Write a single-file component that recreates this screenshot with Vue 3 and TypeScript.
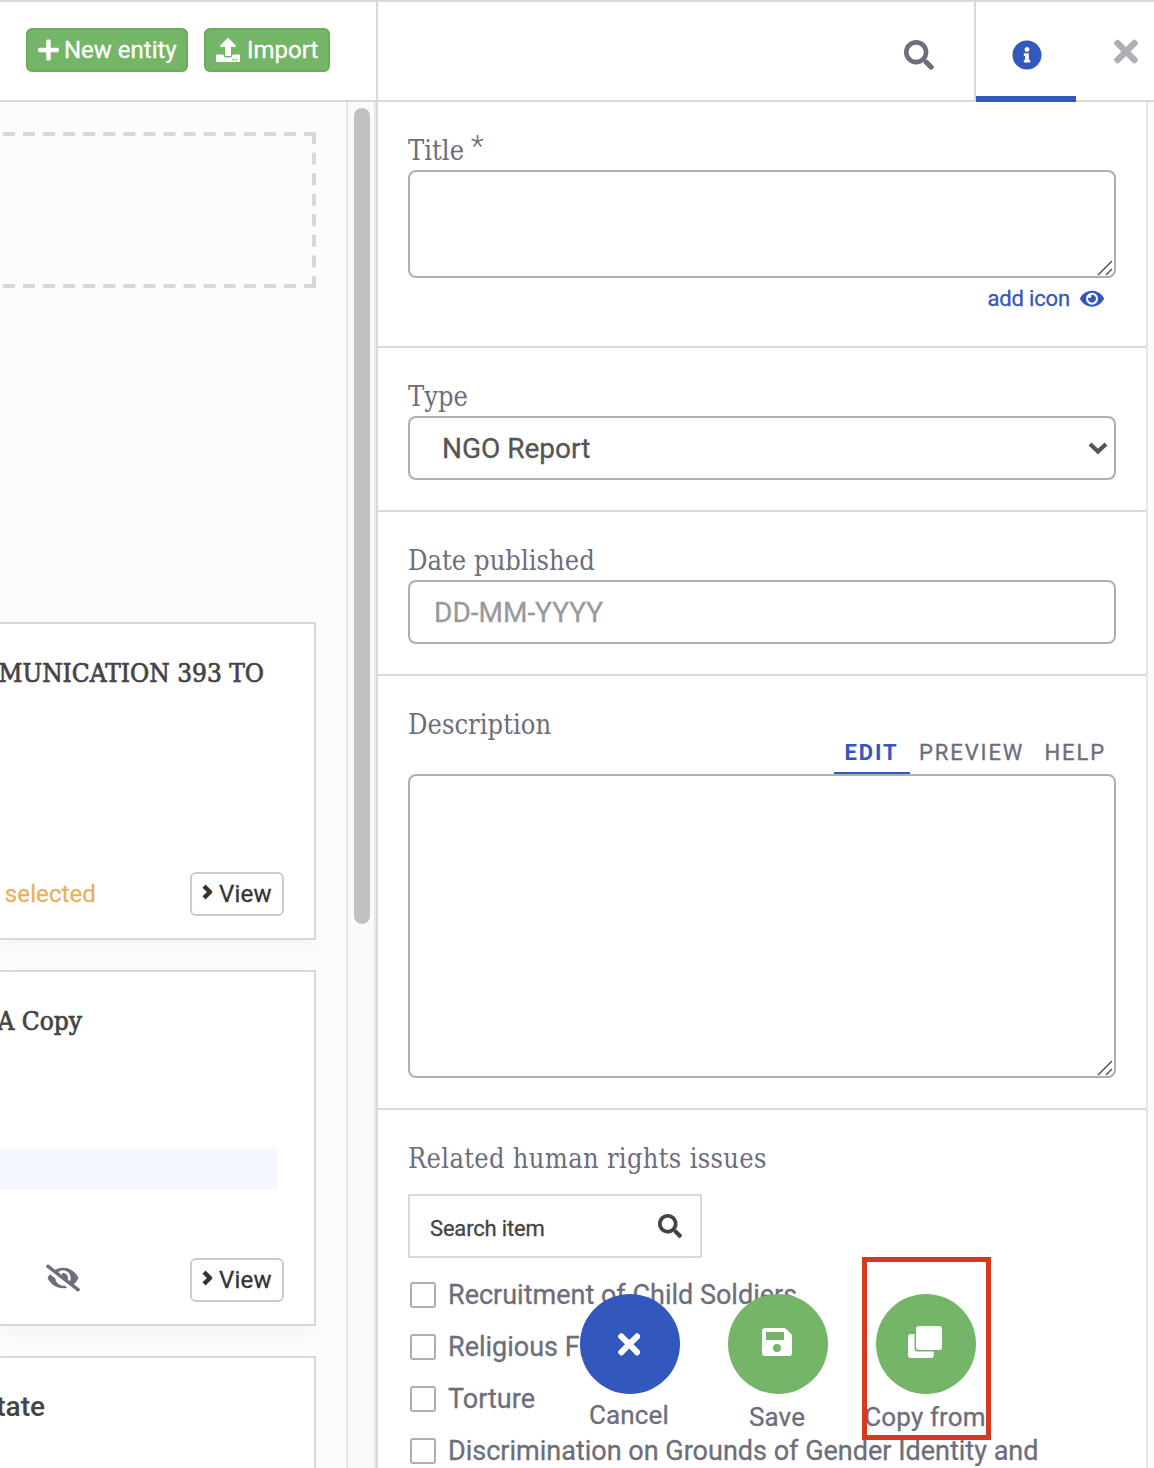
<script setup lang="ts">
interface Issue {
  id: number
  label: string
}

const issues: Issue[] = [
  { id: 1, label: 'Recruitment of Child Soldiers' },
  { id: 2, label: 'Religious Freedom' },
  { id: 3, label: 'Torture' },
  { id: 4, label: 'Discrimination on Grounds of Gender Identity and' },
]

const searchPath =
  'M505 442.7L405.3 343c-4.5-4.5-10.6-7-17-7H372c27.6-35.3 44-79.7 44-128C416 93.1 322.9 0 208 0S0 93.1 0 208s93.1 208 208 208c48.3 0 92.7-16.4 128-44v16.3c0 6.4 2.5 12.5 7 17l99.7 99.7c9.4 9.4 24.6 9.4 33.9 0l28.3-28.3c9.4-9.4 9.4-24.6.1-34zM208 336c-70.7 0-128-57.2-128-128 0-70.7 57.2-128 128-128 70.7 0 128 57.2 128 128 0 70.7-57.2 128-128 128z'
const timesPath =
  'M242.72 256l100.07-100.07c12.28-12.28 12.28-32.19 0-44.48l-22.24-22.24c-12.28-12.28-32.19-12.28-44.48 0L176 189.28 75.93 89.21c-12.28-12.28-32.19-12.28-44.48 0L9.21 111.45c-12.28 12.28-12.28 32.19 0 44.48L109.28 256 9.21 356.07c-12.28 12.28-12.28 32.19 0 44.48l22.24 22.24c12.28 12.28 32.2 12.28 44.48 0L176 322.72l100.07 100.07c12.28 12.28 32.2 12.28 44.48 0l22.24-22.24c12.28-12.28 12.28-32.19 0-44.48L242.72 256z'
</script>

<template>
  <div class="app">
    <header class="topbar">
      <div class="actions">
        <button class="btn-green new">
          <svg width="21" height="24" viewBox="0 0 448 512"><path fill="currentColor" d="M416 208H272V64c0-17.67-14.33-32-32-32h-32c-17.67 0-32 14.33-32 32v144H32c-17.67 0-32 14.33-32 32v32c0 17.67 14.33 32 32 32h144v144c0 17.67 14.33 32 32 32h32c17.67 0 32-14.33 32-32V304h144c17.67 0 32-14.33 32-32v-32c0-17.67-14.33-32-32-32z" /></svg>
          <span>New entity</span>
        </button>
        <button class="btn-green import">
          <svg width="24" height="24" viewBox="0 0 512 512"><path fill="currentColor" d="M296 384h-80c-13.3 0-24-10.7-24-24V192h-87.7c-17.8 0-26.7-21.5-14.1-34.1L242.3 5.7c7.5-7.5 19.8-7.5 27.3 0l152.2 152.2c12.6 12.6 3.7 34.1-14.1 34.1H320v168c0 13.3-10.7 24-24 24zm216-8v112c0 13.3-10.7 24-24 24H24c-13.3 0-24-10.7-24-24V376c0-13.3 10.7-24 24-24h136v8c0 30.9 25.1 56 56 56h80c30.9 0 56-25.1 56-56v-8h136c13.3 0 24 10.7 24 24zm-124 88c0-11-9-20-20-20s-20 9-20 20 9 20 20 20 20-9 20-20zm64 0c0-11-9-20-20-20s-20 9-20 20 9 20 20 20 20-9 20-20z" /></svg>
          <span>Import</span>
        </button>
      </div>
      <div class="tabs">
        <div class="tab tab-search">
          <svg width="30" height="30" viewBox="0 0 512 512"><path fill="#6d6d7b" :d="searchPath" /></svg>
        </div>
        <div class="tab tab-info">
          <svg width="30" height="30" viewBox="0 0 512 512"><path fill="#3358bd" d="M256 8C119.043 8 8 119.083 8 256c0 136.997 111.043 248 248 248s248-111.003 248-248C504 119.083 392.957 8 256 8zm0 110c23.196 0 42 18.804 42 42s-18.804 42-42 42-42-18.804-42-42 18.804-42 42-42zm56 254c0 6.627-5.373 12-12 12h-88c-6.627 0-12-5.373-12-12v-24c0-6.627 5.373-12 12-12h12v-64h-12c-6.627 0-12-5.373-12-12v-24c0-6.627 5.373-12 12-12h64c6.627 0 12 5.373 12 12v100h12c6.627 0 12 5.373 12 12v24z" /></svg>
        </div>
        <div class="tab tab-close">
          <svg width="24" height="35" viewBox="0 0 352 512"><path fill="#aeaeb6" :d="timesPath" /></svg>
        </div>
      </div>
    </header>

    <div class="body">
      <main class="library">
        <svg class="dropzone" width="316" height="156" viewBox="0 0 316 156" fill="none" stroke="#d8d8dc" stroke-width="4">
          <path d="M316 2H0" stroke-dasharray="12 8.07" />
          <path d="M316 154H0" stroke-dasharray="12 8.07" />
          <path d="M314 0V156" stroke-dasharray="12 8.571" />
        </svg>
        <article class="card card-one">
          <h3 class="card-title t1">MUNICATION 393 TO</h3>
          <footer>
            <span class="selected">selected</span>
            <button class="view">
              <svg width="11" height="16" viewBox="0 0 11 16"><path d="M2 2.200L8 8l-6 5.800" fill="none" stroke="#333" stroke-width="4.400" stroke-linejoin="round" /></svg>
              <span>View</span>
            </button>
          </footer>
        </article>
        <article class="card card-two">
          <h3 class="card-title t2">A Copy</h3>
          <div class="snippet"></div>
          <footer>
            <svg class="hidden-icon" width="34" height="28" viewBox="0 0 640 512"><path fill="#6d6d7b" d="M320 400c-75.85 0-137.25-58.71-142.9-133.11L72.2 185.82c-13.79 17.3-26.48 35.59-36.72 55.59a32.35 32.35 0 0 0 0 29.19C89.71 376.41 197.07 448 320 448c26.91 0 52.87-4 77.89-10.46L346 397.39a144.13 144.13 0 0 1-26 2.61zm313.82 58.1l-110.55-85.44a331.25 331.25 0 0 0 81.25-102.07 32.35 32.35 0 0 0 0-29.19C550.29 135.59 442.93 64 320 64a308.15 308.15 0 0 0-147.32 37.7L45.46 3.37A16 16 0 0 0 23 6.18L3.37 31.45A16 16 0 0 0 6.18 53.9l588.36 454.73a16 16 0 0 0 22.46-2.81l19.64-25.27a16 16 0 0 0-2.82-22.45zm-183.72-142l-39.3-30.38A94.75 94.75 0 0 0 416 256a94.76 94.76 0 0 0-121.31-92.21A47.65 47.65 0 0 1 304 192a46.64 46.64 0 0 1-1.54 10l-73.61-56.89A142.31 142.31 0 0 1 320 112a143.92 143.92 0 0 1 144 144c0 21.63-5.29 41.79-13.9 60.11z" /></svg>
            <button class="view">
              <svg width="11" height="16" viewBox="0 0 11 16"><path d="M2 2.200L8 8l-6 5.800" fill="none" stroke="#333" stroke-width="4.400" stroke-linejoin="round" /></svg>
              <span>View</span>
            </button>
          </footer>
        </article>
        <article class="card card-three">
          <h3 class="card-title t3">tate</h3>
        </article>
      </main>
      <div class="scrollbar"><div class="thumb"></div></div>

      <aside class="panel">
        <section class="field f-title">
          <label class="slab">Title<span class="star">*</span></label>
          <div class="area title-area">
            <svg class="grip" width="16" height="16" viewBox="0 0 16 16"><path d="M1 15L15 1M9 15l6-6" stroke="#555" stroke-width="1.500" /></svg>
          </div>
          <a class="add-icon">
            <span>add icon</span>
            <svg width="24" height="21.3" viewBox="0 0 576 512"><path fill="currentColor" d="M572.52 241.4C518.29 135.59 410.93 64 288 64S57.68 135.64 3.48 241.41a32.35 32.35 0 0 0 0 29.19C57.71 376.41 165.07 448 288 448s230.32-71.64 284.52-177.41a32.35 32.35 0 0 0 0-29.19zM288 400a144 144 0 1 1 144-144 143.93 143.93 0 0 1-144 144zm0-240a95.31 95.31 0 0 0-25.31 3.79 47.85 47.85 0 0 1-66.9 66.9A95.78 95.78 0 1 0 288 160z" /></svg>
          </a>
        </section>
        <section class="field f-type">
          <label class="slab">Type</label>
          <div class="input select">
            <span>NGO Report</span>
            <svg width="20" height="14" viewBox="0 0 20 14"><path d="M2 3L10 10.500l8-7.500" fill="none" stroke="#555" stroke-width="4.200" /></svg>
          </div>
        </section>
        <section class="field f-date">
          <label class="slab">Date published</label>
          <div class="input date">DD-MM-YYYY</div>
        </section>
        <section class="field f-desc">
          <label class="slab">Description</label>
          <nav class="md-tabs">
            <span class="active">EDIT</span>
            <span class="preview">PREVIEW</span>
            <span class="help">HELP</span>
          </nav>
          <div class="area desc-area">
            <svg class="grip" width="16" height="16" viewBox="0 0 16 16"><path d="M1 15L15 1M9 15l6-6" stroke="#555" stroke-width="1.500" /></svg>
          </div>
        </section>
        <section class="field f-issues">
          <label class="slab wide">Related human rights issues</label>
          <div class="search-item">
            <span>Search item</span>
            <svg width="24" height="24" viewBox="0 0 512 512"><path fill="#444" :d="searchPath" /></svg>
          </div>
          <ul>
            <li v-for="issue in issues" :key="issue.id">
              <i class="box"></i><span>{{ issue.label }}</span>
            </li>
          </ul>
        </section>
      </aside>
      <div class="panel-track"></div>
    </div>

    <div class="floating">
      <div class="fab cancel">
        <div class="circle"><svg width="22.500" height="32.700" viewBox="0 0 352 512"><path fill="#fff" :d="timesPath" /></svg></div>
        <span>Cancel</span>
      </div>
      <div class="fab save">
        <div class="circle"><svg width="30" height="28" viewBox="0 0 30 28"><path fill="#fff" fill-rule="evenodd" d="M3 0H21.500Q23 0 24 1L29 5.800Q30 6.800 30 8V25Q30 28 27 28H3Q0 28 0 25V3Q0 0 3 0ZM4 4V12H22V4ZM15 16a4 4 0 1 0 0 8a4 4 0 1 0 0-8Z" /></svg></div>
        <span>Save</span>
      </div>
      <div class="fab copy">
        <div class="circle"><svg width="34" height="32" viewBox="0 0 34 32" fill="#fff"><rect x="8" y="0" width="26" height="24" rx="3" /><path d="M6.500 8V22Q6.500 25.500 10 25.500H25.800V29Q25.800 32 22.800 32H3Q0 32 0 29V11Q0 8 3 8Z" /></svg></div>
        <span>Copy from</span>
      </div>
    </div>
    <div class="highlight"></div>
  </div>
</template>

<style>
body {
  margin: 0;
  overflow: hidden;
}
</style>

<style scoped>
.app {
  position: relative;
  width: 1154px;
  height: 1468px;
  overflow: hidden;
  background: #fff;
  font-family: Roboto, sans-serif;
  color: #6d6d7b;
  display: flex;
  flex-direction: column;
  -webkit-text-stroke-width: 0.3px;
}
.app * {
  box-sizing: border-box;
}
svg {
  display: block;
  flex: none;
}
button {
  font: inherit;
  margin: 0;
}
.topbar {
  height: 102px;
  flex: none;
  display: flex;
  border-top: 2px solid #d8d8dc;
  border-bottom: 2px solid #d8d8dc;
}
.actions {
  width: 378px;
  border-right: 2px solid #d8d8dc;
  display: flex;
  gap: 16px;
  padding: 26px 0 0 26px;
}
.btn-green {
  height: 44px;
  padding: 0 0 0 10px;
  display: flex;
  align-items: center;
  background: #75b568;
  border: 2px solid #6aab5c;
  border-radius: 6px;
  color: #fff;
  font-size: 24px;
  line-height: 40px;
  white-space: nowrap;
}
.new {
  width: 162px;
  gap: 5px;
}
.import {
  width: 126px;
  gap: 7px;
}
.tabs {
  flex: 1;
  display: flex;
  justify-content: flex-end;
}
.tab {
  height: 98px;
}
.tab-search {
  padding: 38px 40px 0 0;
}
.tab-info {
  width: 102px;
  height: 100px;
  margin-bottom: -2px;
  position: relative;
  border-left: 2px solid #d8d8dc;
  padding: 38px 0 0 36px;
}
.tab-info::after {
  content: '';
  position: absolute;
  left: 0;
  bottom: 0;
  width: 100px;
  height: 6px;
  background: #3358bd;
}
.tab-close {
  width: 78px;
  padding: 32px 0 0 38px;
}
.body {
  flex: 1;
  min-height: 0;
  display: flex;
}
.library {
  width: 346px;
  background: #fcfcfc;
  overflow: hidden;
  padding-top: 30px;
}
.dropzone {
  margin-bottom: 334px;
}
.card {
  width: 316px;
  background: #fff;
  border: 2px solid #d8d8dc;
  border-left: 0;
  margin-bottom: 30px;
  box-shadow: 0 8px 16px rgba(0, 0, 0, 0.03);
  display: flex;
  flex-direction: column;
}
.card-one {
  height: 318px;
}
.card-two {
  height: 356px;
}
.card-three {
  height: 300px;
}
.card-title {
  margin: 29px 0 0;
  height: 40px;
  line-height: 40px;
  display: flex;
  justify-content: flex-end;
  white-space: nowrap;
  color: #444;
  font-family: 'Roboto Slab', 'DejaVu Serif Condensed', 'DejaVu Serif', serif;
  font-stretch: condensed;
  font-weight: 400;
  font-size: 26px;
  -webkit-text-stroke-width: 0.7px;
}
.t1 {
  width: 264px;
}
.t2 {
  width: 82px;
}
.t3 {
  width: 45px;
  font-family: Roboto, sans-serif;
  font-stretch: normal;
  font-weight: 500;
  font-size: 28px;
  -webkit-text-stroke-width: 0;
}
.snippet {
  width: 278px;
  height: 42px;
  margin-top: 107px;
  background: #f5f8ff;
}
.card footer {
  margin-top: auto;
  height: 66px;
  padding-right: 30px;
  display: flex;
  justify-content: flex-end;
  align-items: flex-start;
}
.selected {
  font-size: 24px;
  line-height: 44px;
  letter-spacing: 0.1px;
  color: #e8b05f;
  margin-right: 94px;
}
.hidden-icon {
  margin: 6px 110px 0 0;
}
.view {
  width: 94px;
  height: 44px;
  border: 2px solid #ccc;
  border-radius: 6px;
  background: #fff;
  color: #333;
  font-size: 24px;
  line-height: 40px;
  letter-spacing: 0.2px;
  padding: 0 0 0 10px;
  display: flex;
  align-items: center;
  gap: 6px;
}
.view svg {
  margin-top: -4px;
}
.scrollbar {
  width: 32px;
  background: #fafafa;
  border-left: 2px solid #e7e7e7;
  border-right: 2px solid #d8d8dc;
  box-shadow: inset -2px 0 0 #e9e9ea;
  padding: 6px 0 0 6px;
}
.thumb {
  width: 16px;
  height: 816px;
  border-radius: 8px;
  background: #c1c1c1;
}
.panel {
  width: 768px;
  display: flex;
  flex-direction: column;
}
.panel-track {
  width: 8px;
  border-left: 2px solid #e7e7e7;
  background: #fafafa;
}
.field {
  flex: none;
  padding: 30px 30px 0;
  border-bottom: 2px solid #d8d8dc;
}
.f-title {
  height: 246px;
}
.f-type,
.f-date {
  height: 164px;
}
.f-desc {
  height: 434px;
}
.f-issues {
  height: 400px;
}
.slab {
  display: block;
  height: 38px;
  line-height: 38px;
  font-family: 'Roboto Slab', 'DejaVu Serif Condensed', 'DejaVu Serif', serif;
  font-stretch: condensed;
  font-weight: 300;
  font-size: 27px;
  letter-spacing: 0.05px;
  white-space: nowrap;
  -webkit-text-stroke-width: 0;
}
.slab.wide {
  letter-spacing: 0.32px;
}
.star {
  position: relative;
  top: -4px;
  font-family: Roboto, sans-serif;
  font-stretch: normal;
  font-size: 30px;
  line-height: 20px;
  margin-left: 7px;
}
.area,
.input {
  border: 2px solid #aeaeb6;
  border-radius: 8px;
  background: #fff;
}
.area {
  position: relative;
}
.grip {
  position: absolute;
  right: 1px;
  bottom: 0;
}
.title-area {
  height: 108px;
}
.add-icon {
  display: flex;
  justify-content: flex-end;
  align-items: center;
  gap: 10px;
  height: 42px;
  padding-right: 12px;
  color: #3358bd;
  font-size: 22px;
  letter-spacing: -0.15px;
}
.add-icon span {
  margin-top: -2px;
}
.input {
  height: 64px;
  line-height: 62px;
  font-size: 28px;
}
.select {
  display: flex;
  align-items: center;
  justify-content: space-between;
  padding: 0 6px 0 32px;
  color: #555;
}
.select span {
  margin-top: 2px;
}
.date {
  padding-left: 24px;
  color: #999;
}
.md-tabs {
  display: flex;
  justify-content: flex-end;
  height: 30px;
  font-size: 22px;
  line-height: 18px;
  letter-spacing: 1.9px;
  padding-right: 9px;
}
.md-tabs span {
  height: 30px;
  white-space: nowrap;
}
.md-tabs .active {
  width: 76px;
  padding-left: 10.5px;
  border-bottom: 2px solid #3358bd;
  color: #3358bd;
  font-weight: 700;
  -webkit-text-stroke-width: 0;
}
.preview {
  width: 125px;
  padding-left: 9px;
}
.help {
  padding-left: 9.5px;
  width: 72px;
}
.desc-area {
  height: 304px;
}
.search-item {
  margin-top: 16px;
  width: 294px;
  height: 64px;
  border: 2px solid #d8d8dc;
  display: flex;
  justify-content: space-between;
  padding: 0 18px 0 20px;
  color: #444;
  font-size: 22px;
  letter-spacing: -0.18px;
  line-height: 66px;
}
.search-item svg {
  margin-top: 18px;
}
ul {
  list-style: none;
  margin: 11px 0 0;
  padding: 0;
}
li {
  height: 52px;
  display: flex;
  align-items: center;
  gap: 12px;
  padding-left: 2px;
  font-size: 27px;
  white-space: nowrap;
}
.box {
  width: 26px;
  height: 26px;
  border: 2px solid #aeaeb6;
  border-radius: 3px;
  flex: none;
}
.floating {
  position: absolute;
  left: 556px;
  top: 1294px;
  display: flex;
}
.fab {
  width: 148px;
  display: flex;
  flex-direction: column;
  align-items: center;
  font-size: 26px;
  letter-spacing: 0.15px;
  line-height: 46px;
  white-space: nowrap;
}
.fab span {
  margin-right: 2px;
}
.circle {
  width: 100px;
  height: 100px;
  border-radius: 50%;
  background: #75b568;
  display: flex;
  align-items: center;
  justify-content: center;
  padding: 0 2px 4px 0;
}
.cancel {
  line-height: 42px;
}
.cancel .circle {
  background: #3358bd;
  padding-bottom: 0;
}
.highlight {
  position: absolute;
  left: 862px;
  top: 1257px;
  width: 129px;
  height: 183px;
  border: 5px solid #d53a20;
}
</style>
